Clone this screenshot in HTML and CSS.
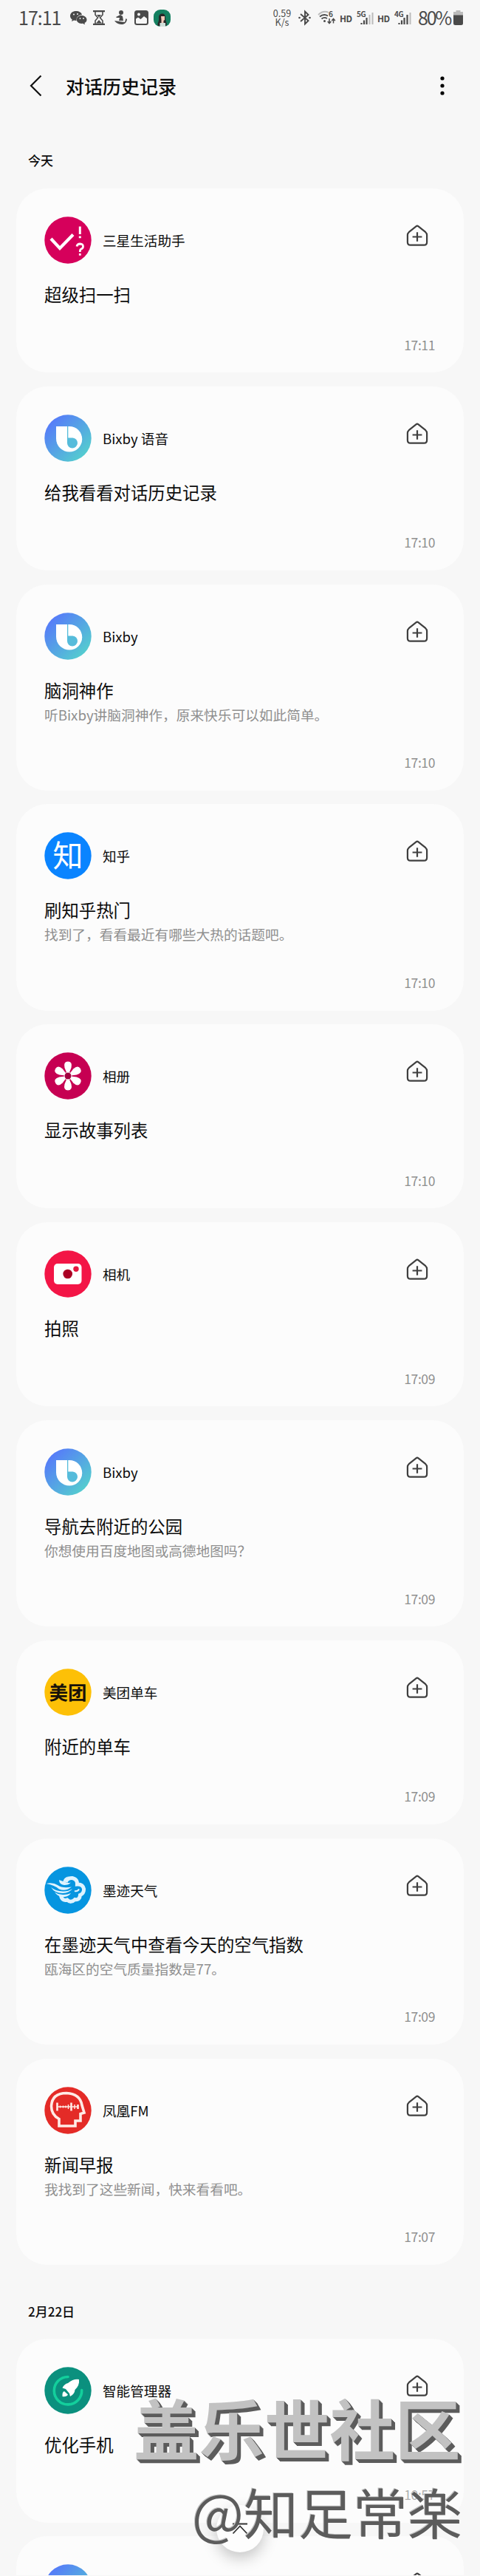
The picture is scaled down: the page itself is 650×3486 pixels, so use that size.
FILE: index.html
```html
<!DOCTYPE html>
<html lang="zh-CN">
<head>
  <meta charset="UTF-8">
  <title>对话历史记录</title>
  <link rel="stylesheet" href="styles.css">
</head>
<body>
  <!-- shared icons -->
  <svg class="defs" width="0" height="0">
    <linearGradient id="bixby-bg" x1="0.1" y1="0.2" x2="0.8" y2="0.9">
      <stop offset="0" stop-color="#567df8"/>
      <stop offset="1" stop-color="#54cbd0"/>
    </linearGradient>
    <symbol id="home" viewBox="0 0 30 30">
      <path d="M13.4 2.3Q15 1 16.6 2.3L26.3 10.2Q28.1 11.8 28.1 14V23.8Q28.1 27.7 24.2 27.7H5.8Q1.9 27.7 1.9 23.8V14Q1.9 11.8 3.7 10.2Z" fill="none" stroke="#3f3f3f" stroke-width="2.2"/>
      <path d="M15 10.3V22.7M8.6 16.5H21.4" stroke="#3f3f3f" stroke-width="2.2"/>
    </symbol>
    <symbol id="bixby" viewBox="0 0 64 64">
      <circle cx="32" cy="32" r="31.7" fill="url(#bixby-bg)"/>
      <path d="M16 16H34A17 17 0 0 1 34 50.500A18 18 0 0 1 16 32.500Z" fill="#fff"/>
      <path d="M32.300 31.500H38.500A7 7 0 1 1 31 38.500V16H32.300Z" fill="#56bcdb"/>
    </symbol>
  </svg>

  <div class="statusbar">
    <span class="clock">17:11</span>
    <svg class="st-wechat" width="23" height="20" viewBox="0 0 23 20">
      <path d="M8 1C3.500 1 0 3.700 0 7.500C0 9.500 1 11.200 2.800 12.400L2 15L5 13.500L8.500 14C8 9 12 6 16 6C15.500 3 12 1 8 1Z" fill="#4a4a4a"/>
      <path d="M15.500 7C11.500 7 8.800 9.500 8.800 12.500C8.800 16 12.500 18.500 17 17.800L20 19.200L19.500 17C21.500 16 22.500 14.500 22.500 12.700C22.500 9.500 19.500 7 15.500 7Z" fill="#4a4a4a"/>
      <g fill="#f7f7f7"><circle cx="5" cy="5.500" r="1"/><circle cx="10" cy="5" r="1"/><circle cx="13.500" cy="11" r=".9"/><circle cx="18" cy="11" r=".9"/></g>
    </svg>
    <svg class="st-glass" width="16" height="20" viewBox="0 0 16 20">
      <path d="M0 1.200H16M0 18.800H16" stroke="#4a4a4a" stroke-width="2.200"/>
      <path d="M3 2V6L6.500 10L3 14V18M13 2V6L9.500 10L13 14V18" fill="none" stroke="#4a4a4a" stroke-width="1.600"/>
      <path d="M5 6H11L8 9.500ZM4 17.500L8 13L12 17.500Z" fill="#4a4a4a"/>
    </svg>
    <svg class="st-boat" width="17" height="20" viewBox="0 0 17 20">
      <circle cx="9" cy="3" r="3" fill="#4a4a4a"/>
      <path d="M2 9L8 6L11 8L12 14L6 14L7 10L3 10ZM0 14L14 16L15.500 11L17 12C16.500 17 13 19.500 9 19C5 18.500 2 17 0 14Z" fill="#4a4a4a"/>
    </svg>
    <svg class="st-image" width="19" height="20" viewBox="0 0 19 20">
      <rect width="19" height="20" rx="3.500" fill="#4a4a4a"/>
      <path d="M2 16.500V11.500L5 9.500L8.500 12L13 8L17 11V16.500Q17 18 15.500 18H3.500Q2 18 2 16.500Z" fill="#f7f7f7"/>
      <circle cx="6" cy="5.500" r="2" fill="#f7f7f7"/>
    </svg>
    <svg class="st-avatar" width="23" height="23" viewBox="0 0 23 23">
      <rect width="23" height="23" rx="9" fill="#148060"/>
      <path d="M6 22C4 19 8 16 7 11C7 7 9 5.500 12 5.500C15 5.500 16 8 16 11C16 16 19 19 17 22Z" fill="#282828"/>
      <path d="M10 9H15V14L13.500 15V18H10.500V14Z" fill="#f3c9b8"/>
      <path d="M8.500 18H16V23H8.500Z" fill="#cfe0da"/>
    </svg>

    <span class="speed">0.59<br>K/s</span>
    <svg class="st-bt" width="17" height="20" viewBox="0 0 17 20">
      <path d="M3 5L13.500 14L9 18.500V1.500L13.500 6L3 15" fill="none" stroke="#4a4a4a" stroke-width="1.900"/>
      <circle cx="1.500" cy="10" r="1.300" fill="#4a4a4a"/><circle cx="15.500" cy="10" r="1.300" fill="#4a4a4a"/>
    </svg>
    <svg class="st-wifi" width="25" height="20" viewBox="0 0 25 20">
      <path d="M1 6Q8 -.5 15 3" fill="none" stroke="#bbb" stroke-width="1.800"/>
      <path d="M3 8.500Q8.500 4 14 7.500M5.500 11.500Q9 8.500 13 11" fill="none" stroke="#4a4a4a" stroke-width="1.800"/>
      <circle cx="9.500" cy="14.500" r="1.500" fill="#4a4a4a"/>
      <path d="M16 11V17.500M13.700 15L16 17.700L18.300 15M21.500 17.500V11.500M19.200 14L21.500 11.300L23.800 14" fill="none" stroke="#4a4a4a" stroke-width="1.500"/>
      <text x="15" y="8.500" class="st-label">6</text>
    </svg>
    <span class="hd">HD</span>
    <svg class="st-signal" width="23" height="20" viewBox="0 0 23 20">
      <text x="0" y="8.500" class="st-label">5G</text>
      <path d="M6.500 17V19M10 13.500V19M13.500 10V19" stroke="#4a4a4a" stroke-width="2.200"/>
      <path d="M17.500 6V19M21.500 3V19" stroke="#bbb" stroke-width="2"/>
    </svg>
    <span class="hd">HD</span>
    <svg class="st-signal" width="23" height="20" viewBox="0 0 23 20">
      <text x="0" y="8.500" class="st-label">4G</text>
      <path d="M6.500 17V19M10 13.500V19M13.500 10V19M17.500 6V19" stroke="#4a4a4a" stroke-width="2.200"/>
      <path d="M21.500 3V19" stroke="#bbb" stroke-width="2"/>
    </svg>
    <span class="percent">80%</span>
    <svg class="st-battery" width="13" height="20" viewBox="0 0 13 20">
      <path d="M3.500 0H9.500V2H13V7H0V2H3.500Z" fill="#bbb"/>
      <path d="M0 6.500H13V17.500Q13 20 10.500 20H2.500Q0 20 0 17.500Z" fill="#4a4a4a"/>
    </svg>
  </div>

  <div class="header">
    <svg width="18" height="30" viewBox="0 0 18 30"><path d="M15.500 1.500L2 15L15.500 28.500" fill="none" stroke="#111" stroke-width="2.200"/></svg>
    <h1>对话历史记录</h1>
    <svg class="more" width="6" height="26" viewBox="0 0 6 26"><circle cx="3" cy="3" r="2.600"/><circle cx="3" cy="13" r="2.600"/><circle cx="3" cy="23" r="2.600"/></svg>
  </div>

  <h2 class="date">今天</h2>
  <div class="list">
    <div class="card">
      <div class="head">
        <svg class="app" viewBox="0 0 64 64">
          <circle cx="32" cy="32" r="31.700" fill="#d6005b"/>
          <path d="M9 30L21 43L39 24.500" fill="none" stroke="#fff" stroke-width="4.200"/>
          <path d="M48.300 13.500V24M48.300 26.500V29.300" stroke="#fff" stroke-width="3"/>
          <path d="M44 40.500Q44.500 37 48.500 37Q52.700 37.200 52.500 40.800Q52.300 43.200 49.500 44.200Q48.300 44.800 48.300 48M48.300 50V52.800" fill="none" stroke="#fff" stroke-width="2.800"/>
        </svg>
        <span class="name">三星生活助手</span>
        <svg class="add"><use href="#home"/></svg>
      </div>
      <div class="title">超级扫一扫</div>
      <div class="time">17:11</div>
    </div>

    <div class="card">
      <div class="head">
        <svg class="app"><use href="#bixby"/></svg>
        <span class="name">Bixby 语音</span>
        <svg class="add"><use href="#home"/></svg>
      </div>
      <div class="title">给我看看对话历史记录</div>
      <div class="time">17:10</div>
    </div>

    <div class="card tall">
      <div class="head">
        <svg class="app"><use href="#bixby"/></svg>
        <span class="name">Bixby</span>
        <svg class="add"><use href="#home"/></svg>
      </div>
      <div class="title">脑洞神作</div>
      <div class="sub">听Bixby讲脑洞神作，原来快乐可以如此简单。</div>
      <div class="time">17:10</div>
    </div>

    <div class="card tall">
      <div class="head">
        <svg class="app" viewBox="0 0 64 64">
          <circle cx="32" cy="32" r="31.700" fill="#0a84ff"/>
          <text x="32" y="47" class="zhi">知</text>
        </svg>
        <span class="name">知乎</span>
        <svg class="add"><use href="#home"/></svg>
      </div>
      <div class="title">刷知乎热门</div>
      <div class="sub">找到了，看看最近有哪些大热的话题吧。</div>
      <div class="time">17:10</div>
    </div>

    <div class="card">
      <div class="head">
        <svg class="app" viewBox="0 0 64 64">
          <circle cx="32" cy="32" r="31.700" fill="#c60052"/>
          <g fill="#fff">
            <path id="petal" d="M32 32L27.500 21Q25.500 12.500 32 12.500Q38.500 12.500 36.500 21Z"/>
            <use href="#petal" transform="rotate(60 32 32)"/>
            <use href="#petal" transform="rotate(120 32 32)"/>
            <use href="#petal" transform="rotate(180 32 32)"/>
            <use href="#petal" transform="rotate(240 32 32)"/>
            <use href="#petal" transform="rotate(300 32 32)"/>
          </g>
          <circle cx="32" cy="32" r="5.300" fill="#fff"/>
          <circle cx="32" cy="32" r="4.500" fill="#a3003f"/>
        </svg>
        <span class="name">相册</span>
        <svg class="add"><use href="#home"/></svg>
      </div>
      <div class="title">显示故事列表</div>
      <div class="time">17:10</div>
    </div>

    <div class="card">
      <div class="head">
        <svg class="app" viewBox="0 0 64 64">
          <circle cx="32" cy="32" r="31.700" fill="#f31546"/>
          <rect x="13" y="18" width="37.500" height="28" rx="5" fill="#fff"/>
          <circle cx="31.700" cy="32" r="6.300" fill="#ab0024"/>
          <circle cx="43" cy="25.300" r="3.700" fill="#e3173f"/>
        </svg>
        <span class="name">相机</span>
        <svg class="add"><use href="#home"/></svg>
      </div>
      <div class="title">拍照</div>
      <div class="time">17:09</div>
    </div>

    <div class="card tall">
      <div class="head">
        <svg class="app"><use href="#bixby"/></svg>
        <span class="name">Bixby</span>
        <svg class="add"><use href="#home"/></svg>
      </div>
      <div class="title">导航去附近的公园</div>
      <div class="sub">你想使用百度地图或高德地图吗？</div>
      <div class="time">17:09</div>
    </div>

    <div class="card">
      <div class="head">
        <svg class="app" viewBox="0 0 64 64">
          <circle cx="32" cy="32" r="31.700" fill="#fdc007"/>
          <text x="32" y="42" class="meituan">美团</text>
        </svg>
        <span class="name">美团单车</span>
        <svg class="add"><use href="#home"/></svg>
      </div>
      <div class="title">附近的单车</div>
      <div class="time">17:09</div>
    </div>

    <div class="card tall">
      <div class="head">
        <svg class="app" viewBox="0 0 64 64">
          <circle cx="32" cy="32" r="31.700" fill="#0695e0"/>
          <path d="M29 21Q31 15 38 15.500Q45 17 44.500 24Q52 23.500 53.500 30Q54 36 48.500 38.500Q48 45.500 41.500 44.500Q36 50 31 45Q24 47 22.500 39" fill="none" stroke="#dff3ff" stroke-width="5"/>
          <path d="M2.500 23Q12 21 18 25Q25 30 37 27.500Q29 34 20 30.500Q14 25 2.500 23ZM20 18Q20 24 27 25Q33 25 36 21.500Q31 23 27 20Q30 14 34 13Q27 14 25.500 20ZM9 28Q14 36 25 36Q34 35.500 38 30Q32 34 25 33.500Q15 33 9 28ZM14 34.500Q19 42 27 41Q33 40.500 36 36Q30 38.500 25 38Q18 37.500 14 34.500Z" fill="#dff3ff"/>
          <path d="M41 33Q45 34 47 30.500" fill="none" stroke="#dff3ff" stroke-width="2"/>
        </svg>
        <span class="name">墨迹天气</span>
        <svg class="add"><use href="#home"/></svg>
      </div>
      <div class="title">在墨迹天气中查看今天的空气指数</div>
      <div class="sub">瓯海区的空气质量指数是77。</div>
      <div class="time">17:09</div>
    </div>

    <div class="card tall">
      <div class="head">
        <svg class="app" viewBox="0 0 64 64">
          <circle cx="32" cy="32" r="31.700" fill="#e42b27"/>
          <path d="M20 53V43.500Q9.500 38 9.500 26Q10.500 8.500 30 8.500Q48.500 9.500 51 25L54 35L49 36.500V46H42V53Z" fill="none" stroke="#ffebe6" stroke-width="3.600"/>
          <path d="M17.500 21.500V32.500M36.500 21.500V32.500M45.500 24V30" stroke="#ffebe6" stroke-width="2.600"/>
          <path d="M21.500 25.500V28.500M25.500 25.500V28.500M29 25.500V28.500M32.500 24V30M41 24V30M17 27H46" stroke="#ffebe6" stroke-width="1.500"/>
        </svg>
        <span class="name">凤凰FM</span>
        <svg class="add"><use href="#home"/></svg>
      </div>
      <div class="title">新闻早报</div>
      <div class="sub">我找到了这些新闻，快来看看吧。</div>
      <div class="time">17:07</div>
    </div>
  </div>

  <h2 class="date second">2月22日</h2>
  <div class="list">
    <div class="card">
      <div class="head">
        <svg class="app" viewBox="0 0 64 64">
          <circle cx="32" cy="32" r="31.700" fill="#0b907e"/>
          <path d="M32 13.500A18.700 18.700 0 1 0 50.700 31.500" fill="none" stroke="#13cf9c" stroke-width="3.600" stroke-linecap="round"/>
          <path d="M47 17Q39 16 32 22Q27 23 24.500 28.500L29 30L34 36L35 40Q41 37 41.500 31Q48 25 47 17ZM27 33Q24 34 24.500 40Q30 41 32 37.500Z" fill="#fff"/>
        </svg>
        <span class="name">智能管理器</span>
        <svg class="add"><use href="#home"/></svg>
      </div>
      <div class="title">优化手机</div>
      <div class="time faint">10:57</div>
    </div>

    <div class="card cut">
      <div class="head">
        <svg class="app"><use href="#bixby"/></svg>
        <span class="name"></span>
        <svg class="add"><use href="#home"/></svg>
      </div>
    </div>
  </div>

  <!-- back to top -->
  <div class="to-top">
    <svg width="22" height="16" viewBox="0 0 22 16"><path d="M1 1.500H21M1.500 14.500L11 4.500L20.500 14.500" fill="none" stroke="#333" stroke-width="1.800"/></svg>
  </div>

  <div class="watermark community">盖乐世社区</div>
  <div class="watermark user">@知足常楽</div>
</body>
</html>
```
FILE: styles.css
```css
* {
  box-sizing: border-box;
}

body {
  position: relative;
  width: 650px;
  height: 3486px;
  margin: 0;
  overflow: hidden;
  background-color: #f7f7f7;
  color: #0c0c0c;
  font-family: "Noto Sans CJK SC", "Noto Sans", sans-serif;
}

.defs {
  position: absolute;
}

svg {
  flex-shrink: 0;
}

/* status bar */
.statusbar {
  display: flex;
  align-items: center;
  height: 48px;
  padding-left: 25px;
  color: #4a4a4a;
  white-space: nowrap;
}

.statusbar svg {
  overflow: visible;
}

.clock {
  width: 70px;
  font-size: 25px;
  letter-spacing: -1px;
  line-height: 46px;
  padding-bottom: 3px;
}

.st-glass {
  margin-left: 8px;
}

.st-boat {
  margin-left: 13px;
}

.st-image {
  margin-left: 10px;
}

.st-avatar {
  margin-left: 7px;
}

.speed {
  width: 26px;
  margin-left: 138px;
  font-size: 12.5px;
  line-height: 12px;
  text-align: center;
}

.st-bt {
  margin-left: 9px;
}

.st-wifi {
  margin-left: 9px;
}

.st-label {
  font-size: 10px;
  font-weight: 700;
  letter-spacing: -0.5px;
  fill: #4a4a4a;
}

.hd {
  width: 16px;
  margin-left: 5px;
  font-size: 12px;
  font-weight: 700;
  letter-spacing: -0.7px;
}

.st-signal {
  margin-left: 7px;
}

.percent {
  width: 44px;
  margin-left: 9px;
  font-size: 25px;
  letter-spacing: -2.2px;
  line-height: 46px;
  padding-bottom: 3px;
}

.st-battery {
  margin-left: 4px;
}

/* title bar */
.header {
  display: flex;
  align-items: center;
  height: 62px;
  margin-top: 37px;
  padding: 0 48px 0 40px;
}

.header h1 {
  flex: 1;
  margin: 0 0 0 31px;
  font-size: 25px;
  font-weight: 500;
  line-height: 40px;
}

.header .more {
  fill: #000;
}

.date {
  margin: 57px 0 0 38px;
  height: 51px;
  font-size: 17px;
  font-weight: 500;
  line-height: 26px;
}

.date.second {
  margin-top: 50px;
  height: 50px;
}

/* cards */
.list {
  display: flex;
  flex-direction: column;
  gap: 18.8px;
  margin: 0 22px;
}

.card {
  display: flex;
  flex-direction: column;
  flex-shrink: 0;
  height: 249px;
  padding: 38px 39px 27.5px 38px;
  border-radius: 42px;
  background-color: #fcfcfc;
}

.card.tall {
  height: 279.1px;
}

/* last card runs under the screen edge */
.card.cut {
  height: 53px;
  padding-bottom: 0;
  border-radius: 42px 42px 0 0;
  overflow: hidden;
}

.head {
  display: flex;
  flex-shrink: 0;
  align-items: center;
  height: 64px;
}

.app {
  width: 64px;
  height: 64px;
}

.name {
  flex: 1;
  margin-left: 15px;
  font-size: 18.6px;
  line-height: 28px;
}

.add {
  align-self: flex-start;
  width: 30px;
  height: 30px;
  margin: 11px 9px 0 0;
}

.title {
  margin-top: 25px;
  font-size: 23.4px;
  line-height: 32px;
}

.sub {
  margin-top: 4px;
  color: #8f8f8f;
  font-size: 18.7px;
  line-height: 26px;
}

.time {
  margin-top: auto;
  color: #8f8f8f;
  font-size: 17.5px;
  letter-spacing: -0.4px;
  line-height: 20px;
  text-align: right;
}

.time.faint {
  opacity: 0.7;
}

.zhi {
  fill: #fff;
  font-size: 41px;
  text-anchor: middle;
}

.meituan {
  fill: #17120a;
  font-size: 25.5px;
  font-weight: 700;
  text-anchor: middle;
}

.to-top {
  position: absolute;
  left: 293px;
  top: 3390px;
  width: 64px;
  height: 64px;
  display: flex;
  align-items: center;
  justify-content: center;
  border-radius: 50%;
  background-color: #fdfdfd;
  box-shadow: 0 8px 20px rgba(0, 0, 0, 0.22);
}

.watermark {
  position: absolute;
  white-space: nowrap;
}

.community {
  left: 181px;
  top: 3238px;
  color: #c2c2c2;
  font-size: 88.5px;
  font-weight: 700;
  line-height: 90px;
  text-shadow: 1px 1px #5c5c5c, 2px 2px #5c5c5c, 3px 3px #5c5c5c, 4px 4px #5c5c5c, 5px 5px #5c5c5c;
}

.user {
  left: 260px;
  top: 3358px;
  color: #5c5c5c;
  font-size: 74px;
  line-height: 80px;
  text-shadow: -1px -1px #c2c2c2;
}
```
